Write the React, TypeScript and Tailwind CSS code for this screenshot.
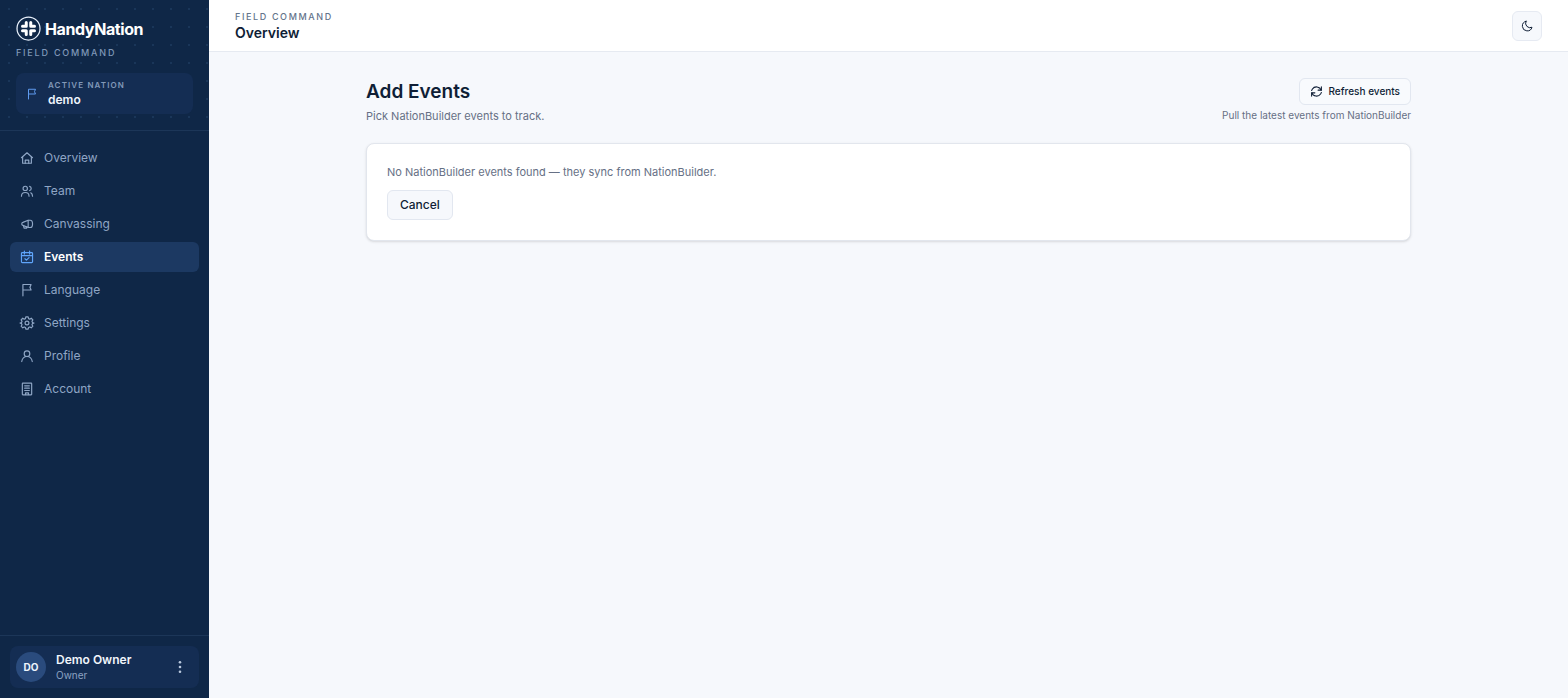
import clsx from 'clsx'

const ICONS = {
  home: (
    <>
      <path d="M2.500 11.500 12 3l9.500 8.500" />
      <path d="M4.500 10v11h15V10" />
      <path d="M9 21v-5.500h6V21" />
    </>
  ),
  team: (
    <>
      <circle cx="9" cy="7.500" r="3.700" />
      <path d="M2.500 21c0-4.200 2.800-6.500 6.500-6.500s6.500 2.300 6.500 6.500" />
      <path d="M16.500 4c3.600.8 3.600 6.200 0 7.200M18.500 15c2 1.200 3 3.200 3 6" />
    </>
  ),
  megaphone: (
    <>
      <path d="M14 5.500 5 9.200a2.700 2.700 0 0 0 0 5.200L14 18z" />
      <path d="M14 5.500h3.500c2.400 0 4 2.400 4 6.300s-1.600 6.200-4 6.200H14M6 15l1 4h4.500l-.8-2.500" />
    </>
  ),
  calendar: (
    <>
      <rect x="2.500" y="4.500" width="19" height="17" rx="1.500" />
      <path d="M2.500 9.500h19M7.500 2v5M16.500 2v5M8.500 15l2.500 2.500 4.500-4.500" />
    </>
  ),
  flag: <path d="M5 22V2.500h14l-2 4.800 2 4.700H5" />,
  settings: (
    <>
      <path d="M10 1.500h4l.7 3 2 .9 2.600-1.600 2.800 2.800-1.600 2.600.9 2 2.600.8-2.600 1-.9 1.900 1.600 2.600-2.800 2.800-2.600-1.600-2 .9-.7 2.900h-4l-.7-2.900-2-.9-2.600 1.600-2.800-2.800 1.600-2.600-.9-1.900L0 12l2.600-.8.9-2-1.600-2.600 2.800-2.800 2.600 1.600 2-.9z" />
      <circle cx="12" cy="12" r="3.300" />
    </>
  ),
  user: (
    <>
      <circle cx="12" cy="8" r="4.800" />
      <path d="M3 21.500c.7-5 4.500-8.700 9-8.700s8.300 3.700 9 8.700" />
    </>
  ),
  building: (
    <>
      <rect x="4" y="2" width="16" height="20" rx=".8" />
      <path d="M8 6.500h8M8 10.500h8M8 14.500h8M9.500 21.500v-3h5v3" />
    </>
  ),
  refresh: (
    <>
      <path d="M20.500 9.500A9 9 0 0 0 4.500 7.500L3 10M3.500 14.500a9 9 0 0 0 16 2L21 14" />
      <path d="M21 3.500v6h-6M3 20.500v-6h6" />
    </>
  ),
  moon: <path d="M10 2.500a9.800 9.800 0 1 0 12 12A9 9 0 0 1 10 2.500z" />,
}

type IconName = keyof typeof ICONS

function Icon({ name, className }: { name: IconName; className?: string }) {
  return (
    <svg
      viewBox="0 0 24 24"
      fill="none"
      stroke="currentColor"
      strokeWidth="2"
      strokeLinecap="round"
      strokeLinejoin="round"
      aria-hidden="true"
      className={clsx('shrink-0 overflow-visible', className)}
    >
      {ICONS[name]}
    </svg>
  )
}

const NAV: { label: string; icon: IconName }[] = [
  { label: 'Overview', icon: 'home' },
  { label: 'Team', icon: 'team' },
  { label: 'Canvassing', icon: 'megaphone' },
  { label: 'Events', icon: 'calendar' },
  { label: 'Language', icon: 'flag' },
  { label: 'Settings', icon: 'settings' },
  { label: 'Profile', icon: 'user' },
  { label: 'Account', icon: 'building' },
]

function LogoMark() {
  return (
    <svg viewBox="0 0 50 50" className="size-[25px] shrink-0" aria-hidden="true">
      <circle cx="25" cy="25" r="23" fill="none" stroke="#e8f0fb" strokeWidth="2.500" />
      <g fill="none" stroke="#fff" strokeWidth="6" strokeLinecap="round" strokeLinejoin="round">
        <path d="M20.500 13v7.500H13" />
        <path d="M29.500 13v7.500H37" />
        <path d="M20.500 37v-7.500H13" />
        <path d="M29.500 37v-7.500H37" />
      </g>
    </svg>
  )
}

function Nav() {
  return (
    <nav className="flex flex-1 flex-col gap-[3px] px-2.5 pt-3">
      {NAV.map(({ label, icon }) => {
        const active = label === 'Events'
        return (
          <a
            key={label}
            href="#"
            aria-current={active ? 'page' : undefined}
            className={clsx(
              'flex h-[30px] items-center gap-2.5 rounded-md px-2.5 text-[12px]',
              active ? 'bg-[#1c3962] font-semibold text-white' : 'text-[#8fa6c5]',
            )}
          >
            <Icon name={icon} className={clsx('size-3.5', active && 'text-[#60a5fa]')} />
            {label}
          </a>
        )
      })}
    </nav>
  )
}

function Sidebar() {
  return (
    <aside className="flex w-[209px] shrink-0 flex-col bg-[#0f2747]">
      <div className="border-b border-[#1c3658] bg-[radial-gradient(circle,#1a3659_1px,transparent_1px)] bg-[size:18px_18px] px-4 pt-4 pb-4">
        <a href="#" className="flex items-center gap-1 text-white">
          <LogoMark />
          <span className="text-[16px] leading-6 font-bold tracking-tight">HandyNation</span>
        </a>
        <p className="mt-1 text-[9px] leading-4 font-medium tracking-[0.2em] text-[#7f97b8]">FIELD COMMAND</p>
        <div className="mt-3 flex items-center gap-2.5 rounded-lg bg-[#142d53] px-2.5 py-1.5">
          <Icon name="flag" className="size-3 text-[#5f9bf0]" />
          <div>
            <p className="text-[8px] leading-3 font-semibold tracking-[0.14em] text-[#8299b9]">ACTIVE NATION</p>
            <p className="text-[12px] leading-[17px] font-semibold text-[#eef4fc]">demo</p>
          </div>
        </div>
      </div>

      <Nav />

      <div className="border-t border-[#1c3658] p-2.5">
        <div className="flex items-center gap-2.5 rounded-lg bg-[#142d53] px-1.5 py-1.5">
          <span className="flex size-[30px] items-center justify-center rounded-full bg-[#2a4b7d] text-[10px] font-bold text-[#eef4fc]">
            DO
          </span>
          <div className="flex-1">
            <p className="text-[12px] leading-4 font-semibold text-[#f1f5fb]">Demo Owner</p>
            <p className="text-[10px] leading-[14px] text-[#8ca3c3]">Owner</p>
          </div>
          <button type="button" aria-label="Account menu" className="px-1.5 text-[#b9c8dd]">
            <svg viewBox="0 0 14 14" fill="currentColor" className="size-3.5">
              <circle cx="7" cy="2.200" r="1.300" />
              <circle cx="7" cy="7" r="1.300" />
              <circle cx="7" cy="11.800" r="1.300" />
            </svg>
          </button>
        </div>
      </div>
    </aside>
  )
}

export default function App() {
  return (
    <div className="flex min-h-screen bg-[#f6f8fc] font-['Inter',sans-serif] text-[#0f1e36]">
      <Sidebar />

      <div className="flex min-w-0 flex-1 flex-col">
        <header className="flex h-[52px] items-center justify-between border-b border-[#e6eaf1] bg-white px-[26px]">
          <div>
            <p className="text-[9px] leading-[14px] font-medium tracking-[0.18em] text-[#64748b]">FIELD COMMAND</p>
            <p className="text-[14px] leading-[18px] font-semibold">Overview</p>
          </div>
          <button
            type="button"
            aria-label="Toggle dark mode"
            className="flex size-[30px] items-center justify-center rounded-md border border-[#e6eaf2] bg-[#f6f8fc]"
          >
            <Icon name="moon" className="size-3" />
          </button>
        </header>

        <main className="mx-auto w-full max-w-[1045px] pt-[26px]">
          <div className="flex items-start justify-between gap-4">
            <div>
              <h1 className="text-[19px] leading-7 font-semibold">Add Events</h1>
              <p className="mt-0.5 text-[11px] leading-4 text-[#667085]">Pick NationBuilder events to track.</p>
            </div>
            <div className="flex flex-col items-end gap-0.5">
              <button
                type="button"
                className="flex h-[27px] items-center gap-1.5 rounded-md border border-[#e2e7f0] bg-[#f8fafd] px-2.5 text-[10px] font-medium"
              >
                <Icon name="refresh" className="size-[13px]" />
                Refresh events
              </button>
              <p className="text-[10px] leading-4 text-[#667085]">Pull the latest events from NationBuilder</p>
            </div>
          </div>

          <section className="mt-[19px] rounded-lg border border-[#e2e6ed] bg-white p-5 shadow-sm">
            <p className="text-[11px] leading-4 text-[#667085]">
              No NationBuilder events found — they sync from NationBuilder.
            </p>
            <button
              type="button"
              className="mt-2.5 h-[30px] rounded-md border border-[#e2e7f0] bg-[#f6f8fc] px-3 text-[12px] font-medium"
            >
              Cancel
            </button>
          </section>
        </main>
      </div>
    </div>
  )
}
